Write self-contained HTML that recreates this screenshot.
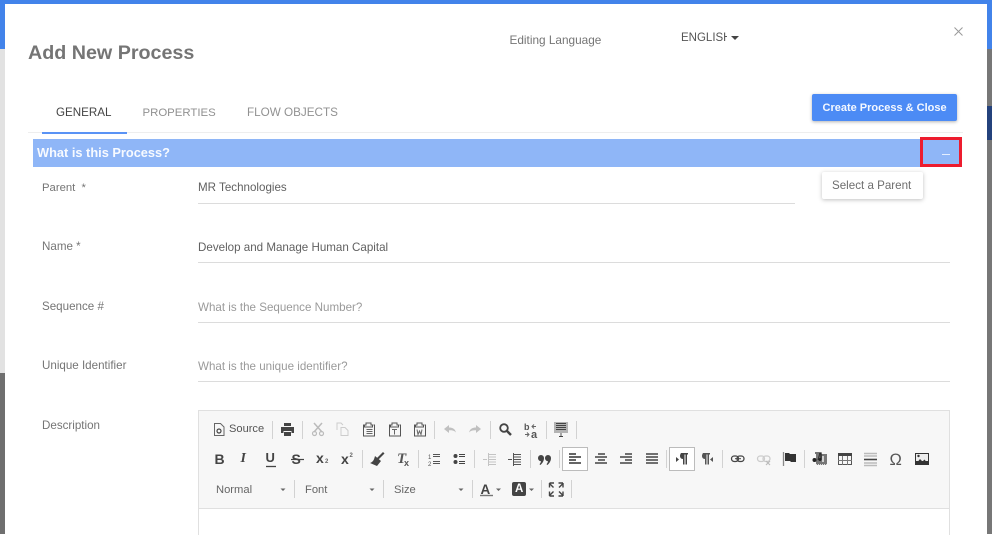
<!DOCTYPE html>
<html><head><meta charset="utf-8"><title>Add New Process</title>
<style>
html,body{margin:0;padding:0;background:#fff}
body{width:1000px;height:534px;overflow:hidden;position:relative;font-family:"Liberation Sans",sans-serif}
.a{position:absolute}
.t{position:absolute;white-space:nowrap;font-size:11.6px;line-height:14px;color:#757575}
.l{position:absolute;height:1px;background:#dcdcdc}
.sep{position:absolute;width:1px;height:18px;background:#d2d2d2}
</style></head><body>
<div class="a" style="left:0;top:0;width:992px;height:534px;background:#e2e2e2"></div>
<div class="a" style="left:0;top:373px;width:5px;height:161px;background:#6f6f6f"></div>
<div class="a" style="left:987px;top:48px;width:5px;height:486px;background:#777"></div>
<div class="a" style="left:987px;top:106px;width:5px;height:34px;background:#24427c"></div>
<div class="a" style="left:0;top:0;width:992px;height:49px;background:#4283ea"></div>
<div class="a" style="left:5px;top:4px;width:982px;height:530px;background:#fff"></div>

<div class="t" style="left:28px;top:41px;font-size:19.7px;line-height:24px;font-weight:bold;color:#757575">Add New Process</div>
<div class="t" style="left:509.500px;top:33px;font-size:11.8px;color:#757575;">Editing Language</div>
<div class="t" style="left:681px;top:31px;width:46px;overflow:hidden;font-size:11.5px;color:#555">ENGLISH</div>
<svg class="a" style="left:731px;top:36px" width="8" height="4"><path d="M0 0h8L4 4z" fill="#444"/></svg>
<svg class="a" style="left:954px;top:27px" width="9" height="9"><path d="M.5.5l8 8M8.500.5l-8 8" stroke="#999" stroke-width="1"/></svg>

<div class="t" style="left:56px;top:106px;font-size:11.6px;color:#444;">GENERAL</div>
<div class="t" style="left:142.500px;top:106px;font-size:11.4px;color:#919191;">PROPERTIES</div>
<div class="t" style="left:247px;top:106px;font-size:11.7px;color:#919191;">FLOW OBJECTS</div>
<div class="l" style="left:28px;top:132px;width:935px;background:#eee;height:1px"></div>
<div class="a" style="left:42px;top:131.500px;width:85px;height:2px;background:#5a93f5"></div>
<div class="a" style="left:812px;top:94px;width:145px;height:27px;background:#4c8bf5;border-radius:2px;box-shadow:0 1px 3px rgba(0,0,0,.3)"></div>
<div class="t" style="left:822.500px;top:100.500px;color:#f4f8ff;font-weight:bold;font-size:11px;">Create Process &amp; Close</div>

<div class="a" style="left:33px;top:139px;width:929px;height:28px;background:#8fb6f7"></div>
<div class="t" style="left:37px;top:145px;color:#f7faff;font-weight:bold;font-size:12.8px;line-height:16px">What is this Process?</div>
<div class="a" style="left:920px;top:137px;width:36px;height:24px;border:3px solid #ed1c2e"></div>
<div class="a" style="left:942px;top:153.500px;width:8px;height:1px;background:#e4eeff"></div>

<div class="a" style="left:822px;top:172px;width:101px;height:27px;background:#fff;border-radius:2px;box-shadow:0 1px 4px rgba(0,0,0,.25)"></div>
<div class="t" style="left:832px;top:178.500px;font-size:11.6px;color:#6e6e6e">Select a Parent</div>

<div class="t" style="left:42px;top:181px;font-size:11.300px;color:#757575">Parent &nbsp;*</div>
<div class="t" style="left:198px;top:181px;color:#616161">MR Technologies</div>
<div class="l" style="left:198px;top:203px;width:597px"></div>
<div class="t" style="left:42px;top:240px;color:#757575">Name *</div>
<div class="t" style="left:198px;top:241px;color:#616161">Develop and Manage Human Capital</div>
<div class="l" style="left:198px;top:262px;width:752px"></div>
<div class="t" style="left:42px;top:300px;color:#757575">Sequence #</div>
<div class="t" style="left:198px;top:301px;color:#9a9a9a">What is the Sequence Number?</div>
<div class="l" style="left:198px;top:322px;width:752px"></div>
<div class="t" style="left:42px;top:359px;color:#757575">Unique Identifier</div>
<div class="t" style="left:198px;top:360px;color:#9a9a9a">What is the unique identifier?</div>
<div class="l" style="left:198px;top:381px;width:752px"></div>
<div class="t" style="left:42px;top:419px;color:#757575">Description</div>

<!-- editor -->
<div class="a" style="left:198px;top:410px;width:750px;height:124px;border:1px solid #e0e0e0;border-bottom:0;background:#fff"></div>
<div class="a" style="left:199px;top:411px;width:750px;height:97px;background:#f7f7f7;border-bottom:1px solid #e0e0e0"></div>
<div class="a" style="left:562px;top:447px;width:24px;height:22px;background:#fff;border:1px solid #bcbcbc"></div>
<div class="a" style="left:669px;top:447px;width:24px;height:22px;background:#fff;border:1px solid #bcbcbc"></div>
<div class="sep" style="left:272px;top:421px"></div><div class="sep" style="left:302px;top:421px"></div><div class="sep" style="left:434px;top:421px"></div><div class="sep" style="left:490px;top:421px"></div><div class="sep" style="left:546px;top:421px"></div><div class="sep" style="left:576px;top:421px"></div>
<div class="sep" style="left:362px;top:450px"></div><div class="sep" style="left:418px;top:450px"></div><div class="sep" style="left:474px;top:450px"></div><div class="sep" style="left:530px;top:450px"></div><div class="sep" style="left:559px;top:450px"></div><div class="sep" style="left:666px;top:450px"></div><div class="sep" style="left:722px;top:450px"></div><div class="sep" style="left:804px;top:450px"></div>
<div class="sep" style="left:294px;top:480px"></div><div class="sep" style="left:383px;top:480px"></div><div class="sep" style="left:472px;top:480px"></div><div class="sep" style="left:541px;top:480px"></div><div class="sep" style="left:571px;top:480px"></div>

<div class="t" style="left:229px;top:422px;font-size:11.100px;color:#555">Source</div>
<div class="t" style="left:216px;top:482.500px;font-size:11.2px;color:#666">Normal</div>
<div class="t" style="left:305px;top:482.500px;font-size:11.2px;color:#666">Font</div>
<div class="t" style="left:394px;top:482.500px;font-size:11.2px;color:#666">Size</div>
<div class="t" style="left:214.500px;top:451px;font-size:14px;line-height:16px;font-weight:bold;color:#444">B</div>
<div class="t" style="left:240.500px;top:451px;font-size:14px;line-height:16px;font-weight:bold;font-style:italic;font-family:'Liberation Serif',serif;color:#444">I</div>
<div class="t" style="left:265.500px;top:450px;font-size:13px;line-height:16px;font-weight:bold;color:#444;">U</div>
<div class="t" style="left:291.500px;top:451px;font-size:14px;line-height:16px;font-weight:bold;color:#444">S</div>
<div class="t" style="left:316px;top:450px;font-size:14px;line-height:16px;font-weight:bold;color:#444">x</div>
<div class="t" style="left:325px;top:458px;font-size:6px;line-height:8px;font-weight:bold;color:#666">2</div>
<div class="t" style="left:341px;top:451px;font-size:14px;line-height:16px;font-weight:bold;color:#444">x</div>
<div class="t" style="left:349.500px;top:452px;font-size:6px;line-height:8px;font-weight:bold;color:#666">2</div>
<div class="t" style="left:397px;top:450px;font-size:15px;line-height:18px;font-weight:bold;font-style:italic;font-family:'Liberation Serif',serif;color:#555">T</div>
<div class="t" style="left:404px;top:458px;font-size:9px;line-height:10px;font-weight:bold;color:#555">x</div>
<div class="t" style="left:889.500px;top:450px;font-size:16.500px;line-height:20px;color:#555">Ω</div>
<div class="t" style="left:480.500px;top:481.500px;font-size:13.500px;line-height:15px;font-weight:bold;color:#444">A</div>
<div class="a" style="left:512px;top:482px;width:14px;height:14px;background:#444;border-radius:2px"></div>
<div class="t" style="left:515px;top:482px;font-size:11.500px;line-height:14px;font-weight:bold;color:#fff">A</div>

<svg class="a" style="left:0;top:0" width="1000" height="534" viewBox="0 0 1000 534" fill="none">
<!-- source -->
<path d="M214.500 423.500h6l3.500 3.500v8.500h-9.500z" stroke="#666"/><circle cx="219" cy="431" r="2" stroke="#444" stroke-width="1.200"/>
<!-- print -->
<path d="M284 423h7v3h-7zM281 427h13v6h-2.500v-2h-8v2H281zM284 432h7v4h-7z" fill="#444"/>
<!-- cut -->
<path d="M314 423l8 9M322 423l-8 9" stroke="#bbb" stroke-width="1.500"/><circle cx="314.500" cy="433.500" r="2" stroke="#bbb" stroke-width="1.200"/><circle cx="321.500" cy="433.500" r="2" stroke="#bbb" stroke-width="1.200"/>
<!-- copy -->
<path d="M337 430v-7h4l2 2M341 427.500h4l3 3v5h-7z" stroke="#ccc"/>
<!-- pastes -->
<g stroke="#555"><path d="M364 425h-.500v11h11v-11h-1M366 425v-2h5v2h1.500v2h-8v-2z"/><path d="M366.500 429.500h6M366.500 431.500h6M366.500 433.500h6" stroke="#666"/>
<path d="M390 425h-.500v11h11v-11h-1M392 425v-2h5v2h1.500v2h-8v-2z"/><path d="M392 429.500h5M394.500 429.500v5" stroke="#666"/>
<path d="M415 425h-.500v11h11v-11h-1M417 425v-2h5v2h1.500v2h-8v-2z"/><path d="M417 429.500l1 5 1.500-3.500 1.500 3.500 1-5" stroke="#666"/></g>
<!-- undo redo -->
<path d="M444 429l5-4v2.500c3 0 6 1 7 5-2-2-4-2.200-7-2.200v2.700z" fill="#c0c0c0"/>
<path d="M481 429l-5-4v2.500c-3 0-6 1-7 5 2-2 4-2.200 7-2.200v2.700z" fill="#c0c0c0"/>
<!-- find -->
<circle cx="504" cy="428" r="3.800" stroke="#444" stroke-width="1.800"/><path d="M507 431l4 4" stroke="#444" stroke-width="2.400"/>
<!-- replace -->
<text x="524" y="430" font-size="9" font-family="Liberation Sans" fill="#555" font-weight="bold">b</text><text x="531" y="438" font-size="11" font-family="Liberation Sans" fill="#555" font-weight="bold">a</text>
<path d="M536 426.500h-4M534 424.500l-2 2 2 2M525 434.500h4M527 432.500l2 2-2 2" stroke="#666"/>
<!-- select all -->
<rect x="554" y="422" width="14" height="11" fill="#b4b4b4"/><path d="M556 423.500h10M556 425.500h10M556 427.500h10M556 429.500h10M561 433v3M559 436.500h4" stroke="#444" stroke-width=".9"/>
<!-- underline, strike -->
<path d="M266 466.500h10" stroke="#444" stroke-width="1.300"/><path d="M291 459.500h13" stroke="#444" stroke-width="1.200"/>
<!-- brush -->
<path d="M377 458l6-6 1.500 1.500-6 6z" fill="#444"/><path d="M375 456l6 5-4 5-7-3c3-1 4-3 5-7z" fill="#444"/>
<!-- lists -->
<path d="M433 454.500h7M433 456.500h7M433 461.500h7M433 463.500h7" stroke="#555"/><text x="428" y="459" font-size="6" font-family="Liberation Sans" fill="#555">1</text><text x="428" y="466" font-size="6" font-family="Liberation Sans" fill="#555">2</text>
<circle cx="455.500" cy="456" r="2" fill="#444"/><circle cx="455.500" cy="462" r="2" fill="#444"/><path d="M459 454.500h6M459 456.500h6M459 461.500h6M459 463.500h6" stroke="#444"/>
<!-- indent -->
<path d="M489 454.500h7M489 457h7M489 459.500h7M489 462h7M489 464.500h7M488.500 453v13M483 459.500h4" stroke="#c4c4c4"/>
<path d="M514 454.500h7M514 457h7M514 459.500h7M514 462h7M514 464.500h7M513.500 453v13M508 459.500h4" stroke="#555"/>
<!-- quote -->
<path d="M538 458a3 3 0 0 1 6 0c0 3-1.500 5-3.500 7l-1-.8c.8-1 1.300-1.800 1.500-3-1.700 0-3-1.400-3-3.200zM545 458a3 3 0 0 1 6 0c0 3-1.500 5-3.500 7l-1-.8c.8-1 1.300-1.800 1.500-3-1.700 0-3-1.400-3-3.200z" fill="#444"/>
<!-- align -->
<path d="M569 454h7M569 457h12M569 460h7M569 463h12" stroke="#333" stroke-width="1.500"/>
<path d="M598 454h7M595 457h12M598 460h7M595 463h12" stroke="#444" stroke-width="1.500"/>
<path d="M625 454h7M620 457h12M625 460h7M620 463h12" stroke="#444" stroke-width="1.500"/>
<path d="M646 454h12M646 457h12M646 460h12M646 463h12" stroke="#444" stroke-width="1.500"/>
<path d="M676 457l3 2.500-3 2.500z" fill="#444"/><path d="M713 457l-3 2.500 3 2.500z" fill="#555"/>
<!-- pilcrows -->
<path d="M681 453h7v1.500h-1v10h-1.500v-10h-1v10H683v-5.500c-2 0-3-1.500-3-3s1-3 1-3z" fill="#444"/>
<path d="M703 453h7v1.500h-1v10h-1.500v-10h-1v10H705v-5.500c-2 0-3-1.500-3-3s1-3 1-3z" fill="#555"/>
<!-- link -->
<rect x="731.500" y="456" width="7" height="5.500" rx="2.700" stroke="#444" stroke-width="1.300"/><rect x="737" y="456" width="7" height="5.500" rx="2.700" stroke="#444" stroke-width="1.300"/><path d="M735 458.700h6" stroke="#444"/>
<rect x="757.500" y="456" width="7" height="5.500" rx="2.700" stroke="#ccc" stroke-width="1.300"/><rect x="763" y="456" width="7" height="5.500" rx="2.700" stroke="#ccc" stroke-width="1.300"/><path d="M766 461l4 4M770 461l-4 4" stroke="#bbb" stroke-width="1.200"/>
<!-- flag -->
<path d="M783.500 452v14" stroke="#888" stroke-width="1.300"/><path d="M785 453h4l1 1h6v8h-5l-1-1h-5z" fill="#333"/>
<!-- media -->
<rect x="816" y="454" width="11" height="11" fill="#777"/><path d="M820 453l-2 7" stroke="#333" stroke-width="1.200"/><path d="M815 453h6v7" stroke="#222" stroke-width="1.300"/><circle cx="814.500" cy="460" r="2" fill="#222"/><circle cx="820" cy="459.500" r="1.500" fill="#222"/><path d="M823 456v6" stroke="#eee" stroke-width="1.500"/><path d="M816 464.500h11" stroke="#ddd" stroke-dasharray="1 1"/>
<!-- table -->
<rect x="838.500" y="453.500" width="13" height="11" stroke="#555"/><rect x="838" y="453" width="14" height="3" fill="#444"/><path d="M838 460.500h14M842.500 456v9M847.500 456v9" stroke="#777"/>
<!-- hr -->
<path d="M864 453.500h13M864 456h13M864 463h13M864 465.500h13" stroke="#bbb" stroke-width="1.400"/><path d="M864 459.500h13" stroke="#444" stroke-width="1.600"/>
<!-- image -->
<rect x="915" y="453" width="14" height="12" fill="#333"/><rect x="916" y="454" width="12" height="7" fill="#eee"/><path d="M916 464l4-5 2.500 2.500 2-2 3.500 4.500z" fill="#333"/><circle cx="918.500" cy="456" r="1.200" fill="#333"/>
<!-- carets -->
<path d="M280.500 488.500h5l-2.500 2.500zM369.500 488.500h5l-2.500 2.500zM458.500 488.500h5l-2.500 2.500zM496 488.500h5l-2.500 2.500zM529 488.500h5l-2.500 2.500z" fill="#666"/>
<!-- A underline -->
<path d="M480 495.500h13" stroke="#777" stroke-width="1.400"/>
<!-- maximize -->
<path d="M549.500 483.500l4 4M549.500 483h4.500M549.500 483v4.500M563 483.500l-4 4M563 483h-4.500M563 483v4.500M549.500 495.500l4-4M549.500 496h4.500M549.500 496v-4.500M563 495.500l-4-4M563 496h-4.500M563 496v-4.500" stroke="#444" stroke-width="1.400"/>
</svg>
</body></html>
